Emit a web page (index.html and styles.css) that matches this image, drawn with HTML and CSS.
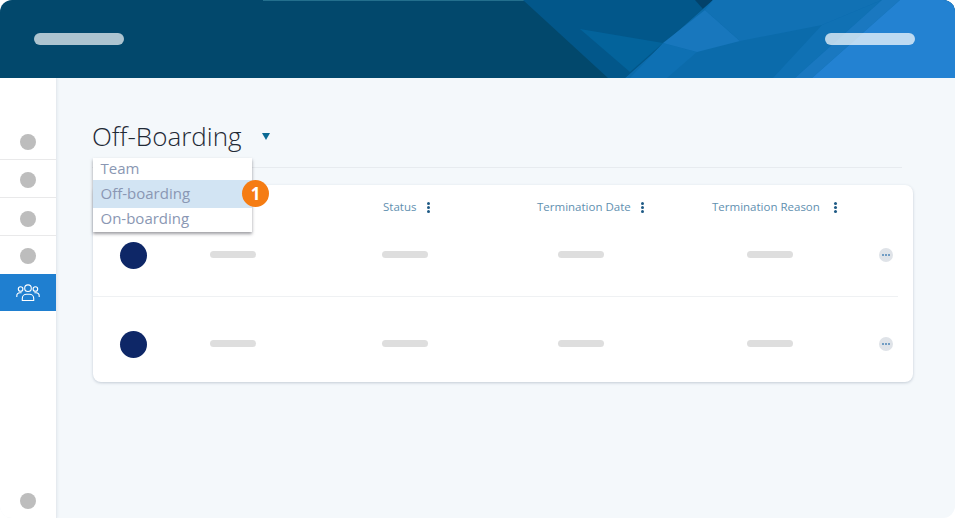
FILE: index.html
```html
<!DOCTYPE html>
<html lang="en">
<head>
<meta charset="utf-8">
<title>Off-Boarding</title>
<link rel="stylesheet" href="styles.css">
</head>
<body>
<div class="app">
  <header class="topbar">
    <svg class="art" viewBox="0 0 955 78" preserveAspectRatio="none" aria-hidden="true">
      <rect width="955" height="78" fill="#02486c"/>
      <rect x="263" width="370" height="1" fill="#236f8d"/>
      <polygon points="523,0 713,0 625,78 608,78" fill="#02578a"/>
      <polygon points="580,29 663,43 630,72" fill="#03639b"/>
      <polygon points="695,0 713,0 703,9" fill="#03426a"/>
      <polygon points="713,0 955,0 955,78 625,78" fill="#0b6bab"/>
      <polygon points="663,43 630,78 667,78 697,52" fill="#0e70b3"/>
      <polygon points="705,10 663,43 697,52 740,41" fill="#1877bd"/>
      <polygon points="713,0 705,10 740,41 822,25 882,0" fill="#1171b4"/>
      <polygon points="882,0 795,78 773,78 822,25" fill="#1071b4"/>
      <polygon points="882,0 900,0 812,78 795,78" fill="#1a78c0"/>
      <polygon points="900,0 955,0 955,78 812,78" fill="#2382d2"/>
    </svg>
    <span class="pill"></span>
    <span class="pill pill-right"></span>
  </header>
  <div class="body">
    <nav class="sidebar">
      <div class="nav-item"><span class="dot"></span></div>
      <div class="nav-item"><span class="dot"></span></div>
      <div class="nav-item nav-third"><span class="dot"></span></div>
      <div class="nav-item nav-last"><span class="dot"></span></div>
      <div class="nav-active">
        <svg class="users" viewBox="0 0 24 18" aria-hidden="true">
          <circle cx="12" cy="4.200" r="3.300"/>
          <circle cx="4.600" cy="5" r="2.300"/>
          <circle cx="19.400" cy="5" r="2.300"/>
          <path d="M6.300 16.500v-2.200c0-2.300 2-4 4.200-4h3c2.200 0 4.200 1.700 4.200 4v2.200z"/>
          <path d="M.8 13v-1c0-1.900 1.400-3.200 3.200-3.200h1.600"/>
          <path d="M23.200 13v-1c0-1.900-1.400-3.200-3.200-3.200h-1.600"/>
        </svg>
      </div>
      <div class="nav-bottom"><span class="dot"></span></div>
    </nav>
    <main class="main">
      <div class="title-row">
        <h1 class="title">Off-Boarding</h1>
        <span class="caret"></span>
      </div>
      <section class="card">
        <div class="thead">
          <div class="th th-status">Status<span class="kebab"><i></i><i></i><i></i></span></div>
          <div class="th th-date">Termination Date<span class="kebab"><i></i><i></i><i></i></span></div>
          <div class="th th-reason">Termination Reason<span class="kebab"><i></i><i></i><i></i></span></div>
        </div>
        <div class="row row-first">
          <span class="avatar"></span>
          <span class="bar"></span>
          <span class="bar"></span>
          <span class="bar"></span>
          <span class="bar"></span>
          <span class="more"><i></i><i></i><i></i></span>
        </div>
        <div class="row row-second">
          <span class="avatar"></span>
          <span class="bar"></span>
          <span class="bar"></span>
          <span class="bar"></span>
          <span class="bar"></span>
          <span class="more"><i></i><i></i><i></i></span>
        </div>
      </section>
      <ul class="menu">
        <li class="menu-item menu-team">Team</li>
        <li class="menu-item menu-selected">Off-boarding</li>
        <li class="menu-item menu-on">On-boarding</li>
      </ul>
      <span class="badge">1</span>
    </main>
  </div>
</div>
</body>
</html>
```
FILE: styles.css
```css
* { box-sizing: border-box; }
html, body { margin: 0; padding: 0; background: #fff; }
body { font-family: "Open Sans", "Liberation Sans", sans-serif; }

.app {
  width: 955px;
  height: 518px;
  display: flex;
  flex-direction: column;
  border-radius: 12px;
  overflow: hidden;
  background: #f4f8fb;
}

.topbar {
  position: relative;
  flex: 0 0 78px;
  display: flex;
  justify-content: space-between;
  align-items: flex-start;
  padding: 33px 40px 0 34px;
}
.art { position: absolute; inset: 0; width: 100%; height: 100%; }
.pill {
  position: relative;
  width: 90px;
  height: 12px;
  border-radius: 6px;
  background: rgba(255, 255, 255, 0.68);
}
.pill-right { background: rgba(255, 255, 255, 0.7); }

.body { flex: 1; display: flex; min-height: 0; }

.sidebar {
  flex: 0 0 57px;
  display: flex;
  flex-direction: column;
  padding-top: 44px;
  background: #fff;
  border-right: 1px solid #e6eaef;
  box-shadow: 1px 0 2px rgba(90, 110, 140, 0.08);
}
.nav-item {
  height: 38px;
  padding-top: 3px;
  display: flex;
  align-items: center;
  justify-content: center;
  border-bottom: 1px solid #e9e9ea;
}
.nav-third { padding-top: 5px; }
.nav-last { padding-top: 2px; border-bottom: 0; }
.dot {
  width: 16px;
  height: 16px;
  border-radius: 50%;
  background: #bdbdbd;
}
.nav-active {
  height: 37px;
  display: flex;
  align-items: center;
  justify-content: center;
  background: #1f7fd0;
}
.users {
  width: 24px;
  height: 18px;
  fill: none;
  stroke: #fff;
  stroke-width: 1.1;
}
.nav-bottom {
  margin-top: auto;
  padding-bottom: 9px;
  display: flex;
  justify-content: center;
}

.main {
  position: relative;
  flex: 1;
  padding: 42px 0 0 35px;
}
.title-row {
  width: 810px;
  height: 48px;
  display: flex;
  align-items: flex-start;
  border-bottom: 1px solid #e7ebef;
}
.title {
  margin: 0;
  font-size: 26px;
  line-height: 32px;
  font-weight: 300;
  color: #1f2a36;
}
.caret {
  width: 0;
  height: 0;
  margin: 13px 0 0 20px;
  border-left: 4px solid transparent;
  border-right: 4px solid transparent;
  border-top: 7px solid #0a6a94;
}

.card {
  width: 820px;
  height: 197px;
  margin: 17px 0 0 1px;
  background: #fff;
  border-radius: 8px;
  box-shadow: 0 1px 3px rgba(70, 90, 120, 0.28);
}
.thead {
  display: grid;
  grid-template-columns: 154px 175px 1fr;
  padding: 14px 0 0 290px;
  height: 30px;
}
.th {
  display: flex;
  align-items: center;
  height: 16px;
  font-size: 11.5px;
  line-height: 16px;
  color: #5f90b0;
}
.th-status .kebab { margin-left: 11px; }
.th-date .kebab { margin-left: 10px; }
.th-reason .kebab { margin-left: 14px; }
.kebab {
  display: flex;
  flex-direction: column;
  gap: 1px;
  width: 3px;
}
.kebab i {
  width: 3px;
  height: 3px;
  border-radius: 50%;
  background: #1f5a85;
}

.row {
  width: 805px;
  display: grid;
  grid-template-columns: 117px 172px 176px 189px 1fr auto;
  align-items: center;
}
.row-first {
  padding: 27px 0 27px;
  border-bottom: 1px solid #eff1f3;
}
.row-second { padding: 34px 0 24px; }
.avatar {
  width: 27px;
  height: 27px;
  margin-left: 27px;
  border-radius: 50%;
  background: #0e2767;
}
.bar {
  width: 46px;
  height: 7px;
  margin-bottom: 2px;
  border-radius: 4px;
  background: #dedede;
}
.more {
  width: 14px;
  height: 14px;
  margin: 0 5px 1px 0;
  border-radius: 50%;
  background: #dfe3e8;
  display: flex;
  align-items: center;
  justify-content: center;
  gap: 1px;
}
.more i {
  width: 2px;
  height: 2px;
  border-radius: 50%;
  background: #4d86b8;
}

.menu {
  position: absolute;
  top: 80px;
  left: 36px;
  width: 159px;
  margin: 0;
  padding: 0;
  list-style: none;
  background: #fff;
  box-shadow: 0 2px 3px rgba(60, 60, 70, 0.5);
}
.menu-item {
  display: flex;
  align-items: center;
  padding: 0 0 2px 7.5px;
  font-size: 15px;
  color: #8a97b3;
}
.menu-team { height: 22px; }
.menu-selected { height: 28px; background: #d2e4f3; }
.menu-on { height: 24px; padding-bottom: 4px; }

.badge {
  position: absolute;
  top: 102px;
  left: 185px;
  width: 27px;
  height: 27px;
  border-radius: 50%;
  background: #f57c13;
  color: #fff;
  font-size: 17px;
  font-weight: 700;
  line-height: 27px;
  text-align: center;
}
```
